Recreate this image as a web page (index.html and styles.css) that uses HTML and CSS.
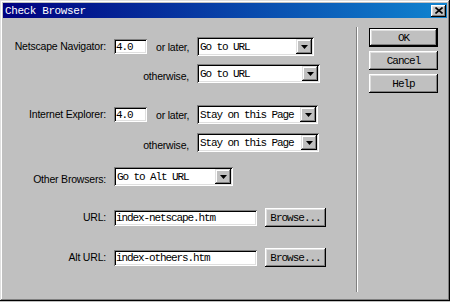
FILE: index.html
```html
<!DOCTYPE html>
<html lang="en">

<head>
  <meta charset="UTF-8" />
  <title>Check Browser</title>
  <link rel="stylesheet" href="styles.css">
</head>

<body>
  <div class="window">
    <div class="titlebar">
      <span class="title">Check Browser</span>
      <span class="close">
        <svg width="8" height="7" viewBox="0 0 8 7"><path d="M0.5 0.5L7.5 6.5M7.5 0.5L0.5 6.5" stroke="#000" stroke-width="1.6" /></svg>
      </span>
    </div>

    <div class="content">
      <div class="form">
        <div class="row">
          <span class="label">Netscape Navigator:</span>
          <span class="field version">4.0</span>
          <span class="later">or later,</span>
          <span class="combo nn-later">
            <span class="value">Go to URL</span>
            <span class="drop"><svg width="7" height="4" viewBox="0 0 7 4"><path d="M0 0h7L3.5 4z" /></svg></span>
          </span>
        </div>
        <div class="row low gap-8">
          <span class="label wide">otherwise,</span>
          <span class="combo nn-other">
            <span class="value">Go to URL</span>
            <span class="drop"><svg width="7" height="4" viewBox="0 0 7 4"><path d="M0 0h7L3.5 4z" /></svg></span>
          </span>
        </div>

        <div class="row gap-22">
          <span class="label">Internet Explorer:</span>
          <span class="field version">4.0</span>
          <span class="later">or later,</span>
          <span class="combo ie-later">
            <span class="value">Stay on this Page</span>
            <span class="drop"><svg width="7" height="4" viewBox="0 0 7 4"><path d="M0 0h7L3.5 4z" /></svg></span>
          </span>
        </div>
        <div class="row low gap-9">
          <span class="label wide">otherwise,</span>
          <span class="combo ie-other">
            <span class="value">Stay on this Page</span>
            <span class="drop"><svg width="7" height="4" viewBox="0 0 7 4"><path d="M0 0h7L3.5 4z" /></svg></span>
          </span>
        </div>

        <div class="row low gap-15">
          <span class="label">Other Browsers:</span>
          <span class="combo others">
            <span class="value">Go to Alt URL</span>
            <span class="drop"><svg width="7" height="4" viewBox="0 0 7 4"><path d="M0 0h7L3.5 4z" /></svg></span>
          </span>
        </div>

        <div class="row gap-22">
          <span class="label">URL:</span>
          <span class="field url">index-netscape.htm</span>
          <span class="btn browse">Browse...</span>
        </div>
        <div class="row gap-21">
          <span class="label">Alt URL:</span>
          <span class="field url">index-otheers.htm</span>
          <span class="btn browse">Browse...</span>
        </div>
      </div>

      <div class="sep"></div>

      <div class="actions">
        <span class="btn default">OK</span>
        <span class="btn">Cancel</span>
        <span class="btn">Help</span>
      </div>
    </div>
  </div>
</body>

</html>
```

FILE: styles.css
```css
* {
  box-sizing: border-box;
}

body {
  margin: 0;
  background: #c0c0c0;
  font-family: "Liberation Sans", Arial, sans-serif;
  color: #000;
}

.window {
  width: 450px;
  height: 301px;
  padding: 3px;
  background: #c0c0c0;
  display: flex;
  flex-direction: column;
  box-shadow: inset -1px -1px #000, inset 1px 1px #dfdfdf,
    inset -2px -2px #808080, inset 2px 2px #fff;
}

.titlebar {
  height: 15px;
  padding: 0 1px 0 2px;
  display: flex;
  align-items: center;
  justify-content: space-between;
  background: linear-gradient(to right, #000080, #1084d0);
}

.title {
  color: #fff;
  font: 11px "Liberation Mono", monospace;
  letter-spacing: -0.4px;
}

.close {
  width: 15px;
  height: 12px;
  background: #c0c0c0;
  display: flex;
  align-items: center;
  justify-content: center;
  box-shadow: inset -1px -1px #000, inset 1px 1px #fff,
    inset -2px -2px #808080, inset 2px 2px #dfdfdf;
}

.close svg {
  display: block;
}

.content {
  flex: 1;
  display: flex;
}

.form {
  width: 349px;
  padding-top: 19px;
  display: flex;
  flex-direction: column;
}

.row {
  height: 19px;
  display: flex;
  align-items: center;
  font-size: 10.5px;
  letter-spacing: -0.2px;
}

.row.low {
  align-items: flex-end;
}

.gap-8 { margin-top: 8px; }
.gap-9 { margin-top: 9px; }
.gap-15 { margin-top: 15px; }
.gap-21 { margin-top: 21px; }
.gap-22 { margin-top: 22px; }

.label {
  width: 103px;
  margin-right: 8px;
  text-align: right;
  white-space: nowrap;
  line-height: 13px;
}

.label.wide {
  width: 186px;
}

.later {
  width: 50px;
  padding-left: 9px;
  white-space: nowrap;
}

/* sunken white fields */
.field,
.combo {
  background: #fff;
  font: 11px "Liberation Mono", monospace;
  letter-spacing: -1.1px;
  display: flex;
  align-items: center;
  white-space: nowrap;
  box-shadow: inset 1px 1px #808080, inset -1px -1px #fff,
    inset 2px 2px #000, inset -2px -2px #dfdfdf;
}

.field {
  height: 15px;
  padding: 1px 2px 0;
}

.version {
  width: 33px;
}

.url {
  width: 143px;
  height: 16px;
}

.combo {
  height: 19px;
  padding: 2px;
}

.combo .value {
  flex: 1;
  padding-left: 1px;
}

.drop {
  width: 16px;
  height: 15px;
  background: #c0c0c0;
  display: flex;
  align-items: center;
  justify-content: center;
  box-shadow: inset -1px -1px #000, inset 1px 1px #dfdfdf,
    inset -2px -2px #808080, inset 2px 2px #fff;
}

.drop svg {
  display: block;
}

.nn-later { width: 117px; }
.nn-other { width: 123px; }
.ie-later { width: 121px; }
.ie-other { width: 122px; }
.others { width: 119px; }

/* raised buttons */
.btn {
  height: 19px;
  background: #c0c0c0;
  font: 11px "Liberation Mono", monospace;
  letter-spacing: -1px;
  display: flex;
  align-items: center;
  justify-content: center;
  box-shadow: inset -1px -1px #000, inset 1px 1px #fff,
    inset -2px -2px #808080, inset 2px 2px #dfdfdf;
}

.btn.default {
  border: 1px solid #000;
}

.browse {
  width: 61px;
  margin-left: 8px;
}

.sep {
  width: 2px;
  margin: 9px 0 6px 4px;
  border-left: 1px solid #808080;
  border-right: 1px solid #fff;
}

.actions {
  width: 80px;
  padding: 10px 0 0 11px;
  display: flex;
  flex-direction: column;
  gap: 4px;
}

.actions .btn {
  width: 69px;
}
```
